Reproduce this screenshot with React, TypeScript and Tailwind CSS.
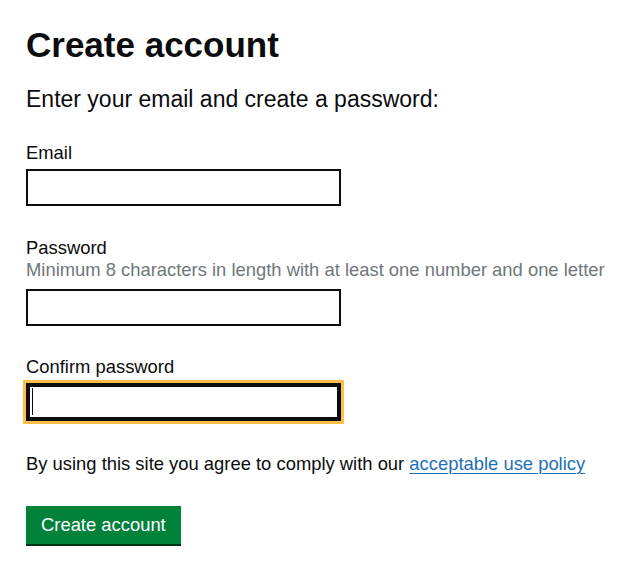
import React from 'react';

// GOV.UK-style "create account" form

const font = 'font-["Liberation_Sans",Arial,sans-serif]';

interface FieldProps {
    id: string;
    label: string;
    hint?: string;
    type?: string;
    focused?: boolean;
    className?: string;
}

const Field: React.FC<FieldProps> = ({ id, label, hint, type = 'text', focused, className }) => (
    <div className={className}>
        <label htmlFor={id} className="block text-[18.4px] leading-[22px] text-[#0b0c0c]">
            {label}
        </label>
        {hint && (
            <div className="text-[18.4px] leading-[22px] text-[#6f777b]">{hint}</div>
        )}
        <div className={`relative w-[315px] ${hint ? 'mt-[8px]' : 'mt-[5px]'}`}>
            <input
                id={id}
                type={type}
                readOnly
                className={
                    focused
                        ? 'block w-full h-[38px] border-2 border-[#0b0c0c] bg-white shadow-[inset_0_0_0_2px_#0b0c0c] outline-[3px] outline-solid outline-[#ffbf47]'
                        : 'block w-full h-[37px] border-2 border-[#0b0c0c] bg-white outline-none'
                }
            />
            {focused && (
                <span className="absolute left-[6px] top-[5px] h-[27px] w-px bg-[#0b0c0c]" />
            )}
        </div>
    </div>
);

export default function App() {
    return (
        <div className={`${font} min-h-[577px] bg-white px-[26px] pt-[25px] text-[#0b0c0c]`}>
            <h1 className="text-[35px] leading-[40px] font-bold">Create account</h1>
            <p className="mt-[19px] text-[23px] leading-[30px]">
                Enter your email and create a password:
            </p>

            <Field id="email" label="Email" type="email" className="mt-[28px]" />
            <Field
                id="password"
                label="Password"
                hint="Minimum 8 characters in length with at least one number and one letter"
                type="password"
                className="mt-[31px]"
            />
            <Field id="confirm" label="Confirm password" type="password" focused className="mt-[30px]" />

            <p className="mt-[30px] text-[18.4px] leading-[25px]">
                By using this site you agree to comply with our{' '}
                <a href="#" className="text-[#1d70b8] underline underline-offset-[3px] decoration-1">
                    acceptable use policy
                </a>
            </p>

            <button
                type="button"
                className="mt-[30px] inline-flex h-[38px] items-center bg-[#00823b] px-[15px] text-[18.4px] text-white shadow-[0_2px_0_#003618]"
            >
                Create account
            </button>
        </div>
    );
}
